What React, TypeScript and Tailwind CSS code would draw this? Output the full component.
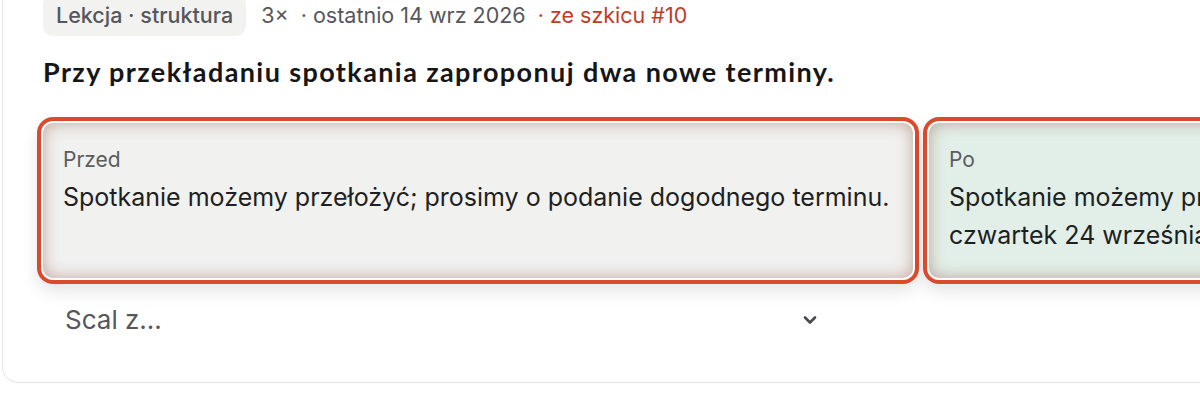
import { ChevronDown } from 'lucide-react';

const boxRing =
  'shadow-[0_0_0_2px_#ffffff,0_0_0_6px_#dc4a2c,0_8px_16px_6px_rgba(0,0,0,0.10),inset_0_0_16px_rgba(130,60,50,0.42)]';

export default function App() {
  return (
    <div className="w-[1200px] h-[400px] overflow-hidden bg-white font-['Inter',sans-serif]">
      {/* Card, top edge scrolled off */}
      <div className="ml-[2px] -mt-[24px] w-[1600px] rounded-2xl border border-[#e4e4e2] bg-white pl-[40px] pt-[17px] pb-[40px]">
        {/* Meta row */}
        <div className="flex items-center gap-[12px] text-[21.5px] text-[#55575c]">
          <span className="rounded-[10px] bg-[#f2f2f0] px-[13px] py-[6px] font-medium leading-[30px]">
            Lekcja · struktura
          </span>
          <span className="ml-[3px]">3×</span>
          <span>· ostatnio 14 wrz 2026</span>
          <span className="text-[#c23b27]">· ze szkicu #10</span>
        </div>

        <h2 className="mt-[19px] font-['Lato',sans-serif] text-[27px] font-bold leading-[34px] tracking-[1.4px] text-[#161618]">
          Przy przekładaniu spotkania zaproponuj dwa nowe terminy.
        </h2>

        {/* Before / after */}
        <div className="mt-[34px] flex gap-4">
          <div className={`w-[870px] shrink-0 rounded-[10px] bg-[#f1f1ef] px-5 py-6 ${boxRing}`}>
            <div className="text-[21px] leading-[26px] text-[#5a5c60]">Przed</div>
            <p className="mt-[5px] text-[25px] leading-[38px] text-[#1e1f22]">
              Spotkanie możemy przełożyć; prosimy o podanie dogodnego terminu.
            </p>
          </div>
          <div className={`w-[870px] shrink-0 rounded-[10px] bg-[#e2efe8] px-5 py-6 ${boxRing}`}>
            <div className="text-[21px] leading-[26px] text-[#5a5c60]">Po</div>
            <p className="mt-[5px] text-[25px] leading-[38px] text-[#1e1f22]">
              Spotkanie możemy przełożyć na środę 23 września o 10:00 lub
              <br />
              czwartek 24 września o 14:00.
            </p>
          </div>
        </div>

        {/* Merge select */}
        <div className="mt-[20px] flex w-[790px] items-center justify-between py-[3px] pl-[22px] pr-[13px]">
          <span className="text-[26px] leading-[38px] text-[#55575c]">Scal z...</span>
          <ChevronDown size={20} strokeWidth={3.2} className="text-[#4a4b4f]" />
        </div>
      </div>
    </div>
  );
}
